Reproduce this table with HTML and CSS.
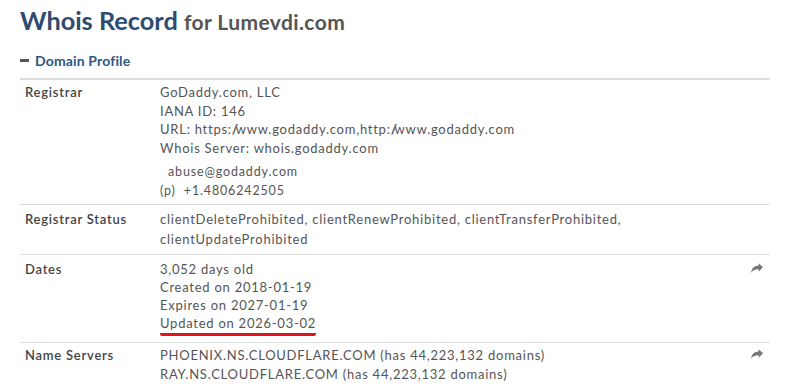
FILE: index.html
```html
<!DOCTYPE html>
<html lang="en">
<head>
  <meta charset="UTF-8" />
  <title>Whois Record for Lumevdi.com</title>
  <link rel="stylesheet" href="styles.css">
</head>
<body>
  <div class="whois">
    <h1 class="title">Whois Record <span class="domain">for Lumevdi.com</span></h1>

    <div class="section-head">
      <span class="minus"></span>
      <span>Domain Profile</span>
    </div>

    <div class="profile">
      <div class="row first">
        <div class="label">Registrar</div>
        <div class="value">
          <div>GoDaddy.com, LLC</div>
          <div>IANA ID: 146</div>
          <div>URL: https:<span class="slashes">//</span>www.godaddy.com,http:<span class="slashes">//</span>www.godaddy.com</div>
          <div>Whois Server: whois.godaddy.com</div>
          <div class="contact">
            <div class="email">abuse@godaddy.com</div>
            <div><span class="phone-tag">(p)</span>+1.4806242505</div>
          </div>
        </div>
      </div>

      <div class="row status">
        <div class="label">Registrar Status</div>
        <div class="value">clientDeleteProhibited, clientRenewProhibited, clientTransferProhibited,<br>clientUpdateProhibited</div>
      </div>

      <div class="row dates">
        <div class="label">Dates</div>
        <div class="value">
          <div>3,052 days old</div>
          <div>Created on 2018-01-19</div>
          <div>Expires on 2027-01-19</div>
          <div><span class="marked">Updated on 2026-03-02</span></div>
        </div>
        <div class="action">
          <svg viewBox="0 0 16 14" width="12" height="11"><path d="M16 5.2 10.2 0v3C4 3.2 1 6.8 0 13c2-3.4 5-5 10.2-5v3.2z" fill="#777"/></svg>
        </div>
      </div>

      <div class="row servers">
        <div class="label">Name Servers</div>
        <div class="value">
          <div>PHOENIX.NS.CLOUDFLARE.COM (has 44,223,132 domains)</div>
          <div>RAY.NS.CLOUDFLARE.COM (has 44,223,132 domains)</div>
        </div>
        <div class="action">
          <svg viewBox="0 0 16 14" width="12" height="11"><path d="M16 5.2 10.2 0v3C4 3.2 1 6.8 0 13c2-3.4 5-5 10.2-5v3.2z" fill="#777"/></svg>
        </div>
      </div>
    </div>
  </div>
</body>
</html>
```

FILE: styles.css
```css
* {
  box-sizing: border-box;
}
body {
  margin: 0;
  background: #fff;
  font-family: Lato, "Open Sans", sans-serif;
  color: #555;
}
.whois {
  width: 750px;
  margin-left: 20px;
  padding-top: 5px;
}
.title {
  margin: 0;
  font-size: 25.3px;
  font-weight: 700;
  color: #2d4c70;
  line-height: 30px;
}
.title .domain {
  font-size: 21px;
  letter-spacing: 0.4px;
  color: #555;
}
.section-head {
  display: flex;
  align-items: center;
  gap: 6px;
  margin-top: 13px;
  height: 20px;
  font-size: 14px;
  font-weight: 700;
  letter-spacing: 0.15px;
  color: #2b5783;
}
.minus {
  width: 9px;
  height: 3px;
  background: #555;
}
.profile {
  margin-top: 8px;
  border-top: 2px solid #ddd;
  font-size: 13px;
  line-height: 18.6px;
  letter-spacing: 0.75px;
}
.row {
  display: flex;
  border-bottom: 1px solid #ddd;
  padding: 4px 0 5px 5px;
}
.row.first {
  padding-top: 3px;
  padding-bottom: 4px;
}
.row.status {
  padding-top: 5px;
  line-height: 19.5px;
}
.label {
  width: 135px;
  color: #444;
  font-weight: 600;
}
.value {
  flex: 1;
}
.slashes {
  letter-spacing: -2.5px;
}
.contact {
  margin-top: 6px;
  font-size: 12.5px;
  line-height: 18.5px;
  letter-spacing: 0.85px;
}
.email {
  padding-left: 8px;
}
.phone-tag {
  margin-right: 8px;
}
.dates {
  padding-top: 5px;
  padding-bottom: 6px;
}
.dates .value {
  line-height: 18px;
}
.marked {
  display: inline-block;
  padding-bottom: 1px;
  border-bottom: 3px solid #e0141e;
  border-radius: 2px;
  line-height: 17px;
}
.servers {
  padding-top: 3px;
}
.action {
  width: 19px;
}
.action svg {
  display: block;
  margin-top: 3px;
}
```
